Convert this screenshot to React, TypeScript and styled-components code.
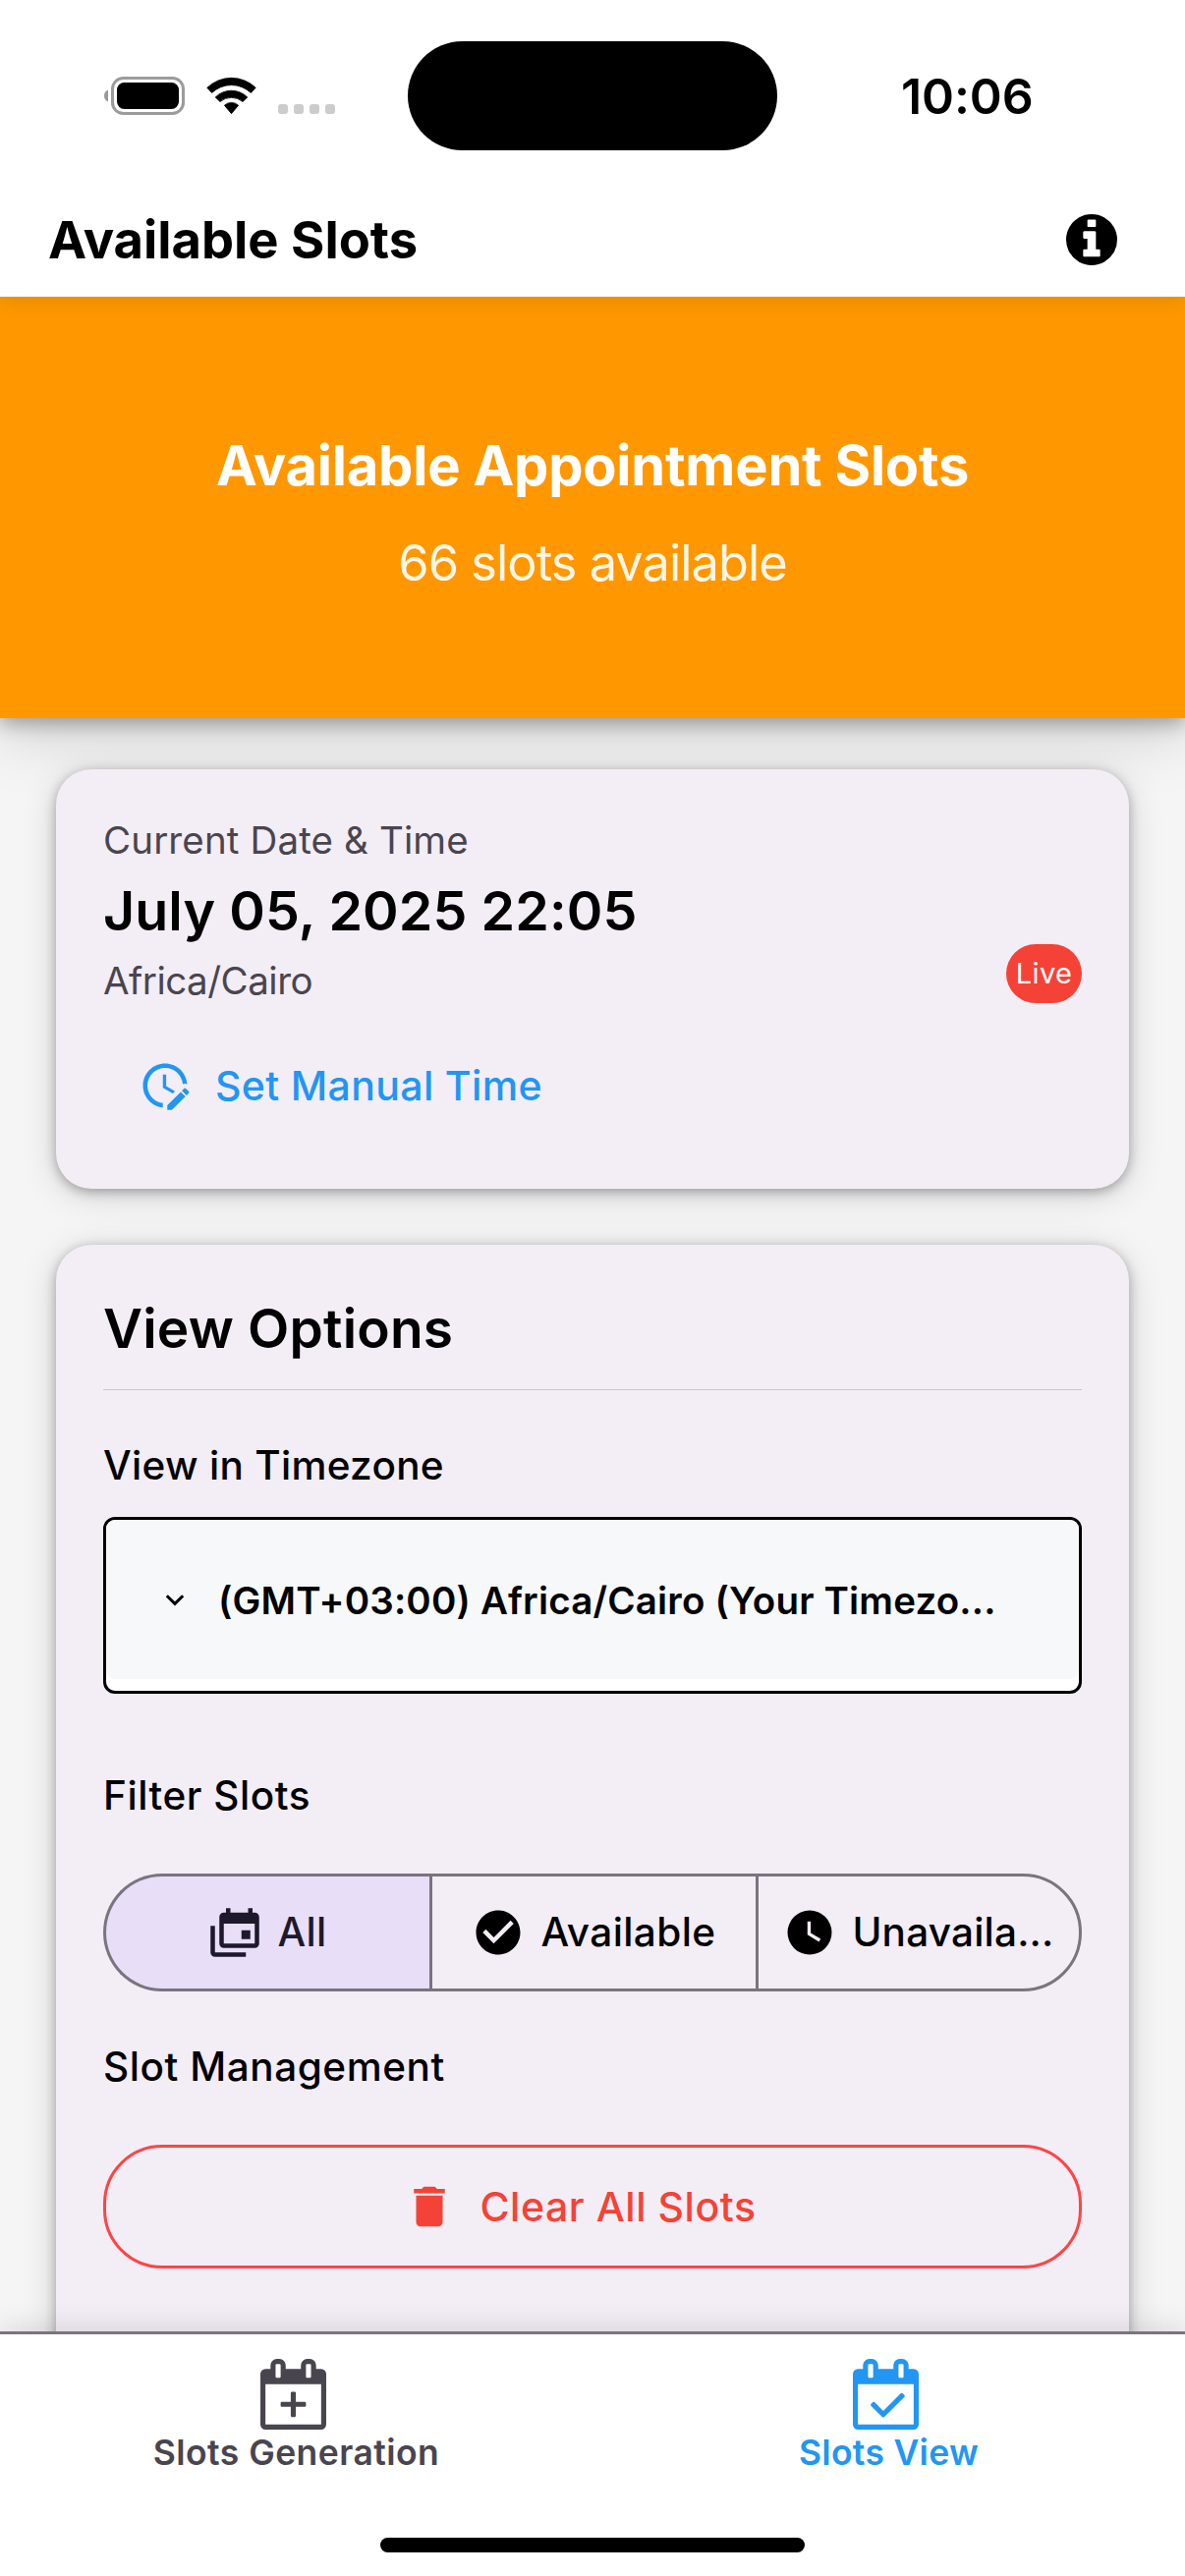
import React from "react";
import styled, { createGlobalStyle } from "styled-components";

const GlobalStyle = createGlobalStyle`
  *, *::before, *::after { box-sizing: border-box; }
  html, body { margin: 0; padding: 0; background: #ffffff; }
  h1, h2 { margin: 0; }
  button { font: inherit; margin: 0; padding: 0; border: 0; background: none; color: inherit; }
  svg { display: block; flex: none; }
`;

const Screen = styled.div`
  width: 1206px;
  height: 2622px;
  display: flex;
  flex-direction: column;
  overflow: hidden;
  background: #f5f5f5;
  color: #000000;
  font-family: Inter, "Liberation Sans", sans-serif;
`;

const Text = styled.span<{
  $size: number;
  $line: number;
  $weight?: number;
  $spacing?: number;
  $color?: string;
}>`
  display: block;
  font-size: ${(p) => p.$size}px;
  line-height: ${(p) => p.$line}px;
  font-weight: ${(p) => p.$weight ?? 400};
  letter-spacing: ${(p) => p.$spacing ?? 0}px;
  color: ${(p) => p.$color ?? "inherit"};
  white-space: nowrap;
`;

/* Top bars */

const TopArea = styled.header`
  position: relative;
  z-index: 2;
  flex: none;
  background: #ffffff;
  box-shadow: 0 3px 24px rgba(0, 0, 0, 0.11);
`;

const StatusBar = styled.div`
  height: 194px;
  display: grid;
  grid-template-columns: 415px 376px 1fr;
  align-items: center;
`;

const StatusIcons = styled.div`
  display: flex;
  align-items: center;
  padding: 1px 0 0 106px;
`;

const WifiSlot = styled.div`
  margin-left: 22px;
`;

const SignalDots = styled.div`
  display: flex;
  gap: 6px;
  margin: 27px 0 0 22px;
`;

const SignalDot = styled.i`
  width: 10px;
  height: 10px;
  border-radius: 3px;
  background: #cccccc;
`;

const Island = styled.div`
  height: 111px;
  border-radius: 56px;
  background: #000000;
`;

const Clock = styled.div`
  padding: 2px 0 0 126px;
`;

const TitleBar = styled.div`
  height: 108px;
  display: flex;
  align-items: center;
  justify-content: space-between;
  padding: 0 69px 8px 49px;
`;

const Hero = styled.section`
  flex: none;
  height: 429px;
  padding-top: 136px;
  display: flex;
  flex-direction: column;
  align-items: center;
  gap: 30px;
  background: #ff9800;
  color: #ffffff;
  box-shadow: 0 18px 60px rgba(0, 0, 0, 0.15), 0 6px 18px rgba(0, 0, 0, 0.3);
`;

/* Cards */

const Content = styled.main`
  flex: 1;
  min-height: 0;
  overflow: hidden;
  display: flex;
  flex-direction: column;
  gap: 57px;
  padding: 52px 57px 0;
`;

const Card = styled.section<{ $height: number }>`
  flex: none;
  height: ${(p) => p.$height}px;
  padding: 48px;
  border-radius: 36px;
  background: #f3edf6;
  box-shadow: 0 6px 36px rgba(0, 0, 0, 0.15), 0 3px 12px rgba(0, 0, 0, 0.3);
`;

const TimeRow = styled.div`
  display: flex;
  align-items: flex-end;
  justify-content: space-between;
`;

const LiveBadge = styled.div`
  width: 77px;
  height: 60px;
  display: flex;
  align-items: center;
  justify-content: center;
  border-radius: 30px;
  background: #f44336;
  color: #ffffff;
`;

const LinkButton = styled.button`
  height: 60px;
  margin-top: 54px;
  padding-left: 36px;
  display: flex;
  align-items: center;
  gap: 24px;
  color: #2196f3;
`;

const Divider = styled.hr`
  height: 1px;
  margin: 25px 0 0;
  border: 0;
  background: #cac4d0;
`;

const FieldLabel = styled.div<{ $top: number }>`
  margin-top: ${(p) => p.$top}px;
`;

const Select = styled.div`
  height: 180px;
  margin-top: 22px;
  border: 3px solid #000000;
  border-radius: 12px;
  background: #ffffff;
`;

const SelectFill = styled.div`
  height: 162px;
  display: flex;
  align-items: center;
  gap: 34px;
  padding: 2px 0 0 60px;
  border-radius: 9px;
  background: #f7f8fa;
`;

const Segments = styled.div`
  height: 120px;
  margin-top: 49px;
  display: grid;
  grid-template-columns: repeat(3, 1fr);
`;

const Segment = styled.button<{ $active?: boolean }>`
  display: flex;
  align-items: center;
  justify-content: center;
  gap: 16px;
  border: 3px solid #79747e;
  border-right-width: 0;
  background: ${(p) => (p.$active ? "#e8def8" : "transparent")};
  color: ${(p) => (p.$active ? "#1d192b" : "#000000")};

  &:first-child {
    border-radius: 60px 0 0 60px;
  }

  &:last-child {
    border-right-width: 3px;
    border-radius: 0 60px 60px 0;
  }
`;

const ClearButton = styled.button`
  width: 100%;
  height: 126px;
  margin-top: 49px;
  padding-right: 26px;
  display: flex;
  align-items: center;
  justify-content: center;
  gap: 24px;
  border: 3px solid #ff4444;
  border-radius: 60px;
  color: #f44336;
`;

/* Bottom navigation */

const BottomNav = styled.nav`
  position: relative;
  z-index: 2;
  flex: none;
  height: 249px;
  display: flex;
  flex-direction: column;
  align-items: center;
  border-top: 3px solid #79747e;
  background: #ffffff;
  box-shadow: 0 -6px 24px rgba(0, 0, 0, 0.1);
`;

const NavItems = styled.div`
  width: 100%;
  height: 207px;
  display: grid;
  grid-template-columns: 1fr 1fr;
`;

const NavItem = styled.button<{ $active?: boolean }>`
  display: flex;
  flex-direction: column;
  align-items: center;
  justify-content: flex-start;
  padding-top: 25px;
  color: ${(p) => (p.$active ? "#2196f3" : "#49454f")};
`;

const NavIcon = styled.div`
  width: 73px;
  height: 72px;
`;

const HomeIndicator = styled.div`
  width: 432px;
  height: 15px;
  border-radius: 8px;
  background: #000000;
`;

/* Icons */

const Battery = () => (
  <svg width="82" height="39" viewBox="0 0 82 39">
    <path d="M4 13.5v12C1.5 24.6 0 22.3 0 19.5s1.500-5.100 4-6z" fill="#999999" />
    <rect x="8.500" y="1.500" width="72" height="36" rx="11" fill="none" stroke="#9b9b9b" strokeWidth="3" />
    <rect x="13" y="6" width="63" height="27" rx="7.500" />
  </svg>
);

const Wifi = () => (
  <svg width="51" height="39" viewBox="0 0 51 39" stroke="#000" strokeWidth="0.8" strokeLinejoin="round">
    <path d="M.8 11.300A35.500 35.500 0 0 1 50.200 11.300L45.400 16.500A29 29 0 0 0 5.600 16.500Z" />
    <path d="M9.200 21A23 23 0 0 1 41.800 21L37 25.500A18 18 0 0 0 14 25.500Z" />
    <path d="M18.400 29.200A10.400 10.400 0 0 1 32.600 29.200L25.500 37.700Z" />
  </svg>
);

const InfoCircle = () => (
  <svg width="52" height="52" viewBox="128 128 1536 1536">
    <path d="M1152 1376v-160q0-14-9-23t-23-9h-96v-512q0-14-9-23t-23-9h-320q-14 0-23 9t-9 23v160q0 14 9 23t23 9h96v320h-96q-14 0-23 9t-9 23v160q0 14 9 23t23 9h448q14 0 23-9t9-23zm-128-896v-160q0-14-9-23t-23-9h-192q-14 0-23 9t-9 23v160q0 14 9 23t23 9h192q14 0 23-9t9-23zm640 416q0 209-103 385.5t-279.5 279.5-385.5 103-385.5-103-279.5-279.5-103-385.5 103-385.5 279.5-279.5 385.5-103 385.5 103 279.5 279.5 103 385.5z" />
  </svg>
);

const Glyph = ({ d }: { d: string }) => (
  <svg width="54" height="54" viewBox="0 0 24 24" fill="currentColor">
    <path d={d} />
  </svg>
);

const CLOCK_EDIT =
  "M21 13.1c-.1 0-.3.1-.4.2l-1 1l2.1 2.1l1-1c.2-.2.2-.6 0-.8l-1.3-1.3c-.1-.1-.2-.2-.4-.2m-1.900 1.800l-6.100 6V23h2.100l6.100-6.100zM12.500 7v5.200l4 2.400l-1 1L11 13V7zM11 21.900c-5.100-.5-9-4.800-9-9.900C2 6.500 6.500 2 12 2c5.300 0 9.600 4.100 10 9.300c-.3-.1-.6-.2-1-.2s-.7.1-1 .2C19.600 7.200 16.200 4 12 4c-4.400 0-8 3.600-8 8c0 4.100 3.100 7.500 7.100 7.900l-.1.2z";
const CALENDAR_MULTIPLE =
  "M21 17V8H7v9zm0-14a2 2 0 0 1 2 2v12a2 2 0 0 1-2 2H7a2 2 0 0 1-2-2V5a2 2 0 0 1 2-2h1V1h2v2h8V1h2v2zM3 21h14v2H3a2 2 0 0 1-2-2V9h2zm16-6h-4v-4h4z";
const CHECK_CIRCLE =
  "M12 2C6.500 2 2 6.500 2 12s4.500 10 10 10s10-4.500 10-10S17.500 2 12 2m-2 15l-5-5l1.410-1.410L10 14.170l7.590-7.590L19 8z";
const CLOCK =
  "M12 2A10 10 0 0 0 2 12a10 10 0 0 0 10 10a10 10 0 0 0 10-10A10 10 0 0 0 12 2m4.200 14.200L11 13V7h1.500v5.200l4.500 2.700z";
const DELETE = "M19 4h-3.500l-1-1h-5l-1 1H5v2h14M6 19a2 2 0 0 0 2 2h8a2 2 0 0 0 2-2V7H6z";

const CALENDAR_FRAME =
  "M128 1664h1408v-1024h-1408v1024zm384-1216v-288q0-14-9-23t-23-9h-64q-14 0-23 9t-9 23v288q0 14 9 23t23 9h64q14 0 23-9t9-23zm768 0v-288q0-14-9-23t-23-9h-64q-14 0-23 9t-9 23v288q0 14 9 23t23 9h64q14 0 23-9t9-23zm384-64v1280q0 52-38 90t-90 38h-1408q-52 0-90-38t-38-90v-1280q0-52 38-90t90-38h128v-96q0-66 47-113t113-47h64q66 0 113 47t47 113v96h384v-96q0-66 47-113t113-47h64q66 0 113 47t47 113v96h128q52 0 90 38t38 90z";
const PLUS_MARK =
  "M1152 1120v64q0 14-9 23t-23 9h-224v224q0 14-9 23t-23 9h-64q-14 0-23-9t-9-23v-224h-224q-14 0-23-9t-9-23v-64q0-14 9-23t23-9h224v-224q0-14 9-23t23-9h64q14 0 23 9t9 23v224h224q14 0 23 9t9 23z";
const CHECK_MARK =
  "M1303 964l-512 512q-10 9-23 9t-23-9l-288-288q-9-10-9-23t9-22l46-46q9-9 22-9t23 9l220 220 444-444q10-9 23-9t22 9l46 46q9 9 9 22t-9 23z";

const CalendarGlyph = ({ mark }: { mark: string }) => (
  <svg width="67" height="72" viewBox="0 0 1664 1792" preserveAspectRatio="none" fill="currentColor">
    <path d={CALENDAR_FRAME} />
    <path d={mark} />
  </svg>
);

const ChevronDown = () => (
  <svg width="20" height="14" viewBox="0 0 20 14" fill="none" stroke="#000" strokeWidth="3">
    <path d="M1.800 2.200L10 10.400L18.200 2.200" />
  </svg>
);

export default function App() {
  return (
    <Screen>
      <GlobalStyle />
      <TopArea>
        <StatusBar>
          <StatusIcons>
            <Battery />
            <WifiSlot>
              <Wifi />
            </WifiSlot>
            <SignalDots>
              <SignalDot />
              <SignalDot />
              <SignalDot />
              <SignalDot />
            </SignalDots>
          </StatusIcons>
          <Island />
          <Clock>
            <Text $size={50} $line={60} $weight={600} $spacing={-0.1}>10:06</Text>
          </Clock>
        </StatusBar>
        <TitleBar>
          <Text as="h1" $size={52.5} $line={64} $weight={700}>Available Slots</Text>
          <InfoCircle />
        </TitleBar>
      </TopArea>

      <Hero>
        <Text as="h2" $size={56} $line={72} $weight={700} $spacing={-0.2}>Available Appointment Slots</Text>
        <Text $size={50.5} $line={66} $spacing={-0.95} $color="rgba(255,255,255,0.9)">66 slots available</Text>
      </Hero>

      <Content>
        <Card $height={427}>
          <TimeRow>
            <div>
              <Text $size={38.5} $line={48} $spacing={0.13} $color="#49454f">Current Date &amp; Time</Text>
              <Text $size={55.5} $line={96} $weight={600} $spacing={0.1}>July 05, 2025 22:05</Text>
              <Text $size={38.5} $line={46} $spacing={-0.5} $color="#49454f">Africa/Cairo</Text>
            </div>
            <LiveBadge>
              <Text $size={29} $line={40} $spacing={0.3}>Live</Text>
            </LiveBadge>
          </TimeRow>
          <LinkButton>
            <Glyph d={CLOCK_EDIT} />
            <Text $size={41} $line={60} $weight={500} $spacing={0.35}>Set Manual Time</Text>
          </LinkButton>
        </Card>

        <Card $height={1200}>
          <Text as="h2" $size={55} $line={74} $weight={600} $spacing={0.2}>View Options</Text>
          <Divider />
          <FieldLabel $top={47}>
            <Text $size={40.5} $line={60} $weight={500} $spacing={0.3}>View in Timezone</Text>
          </FieldLabel>
          <Select>
            <SelectFill>
              <ChevronDown />
              <Text $size={38.5} $line={56} $weight={600} $spacing={0.18}>(GMT+03:00) Africa/Cairo (Your Timezo...</Text>
            </SelectFill>
          </Select>
          <FieldLabel $top={74}>
            <Text $size={40.5} $line={60} $weight={500} $spacing={0.55}>Filter Slots</Text>
          </FieldLabel>
          <Segments>
            <Segment $active>
              <Glyph d={CALENDAR_MULTIPLE} />
              <Text $size={40.5} $line={60} $weight={500} $spacing={0.3}>All</Text>
            </Segment>
            <Segment>
              <Glyph d={CHECK_CIRCLE} />
              <Text $size={40.5} $line={60} $weight={500} $spacing={0.4}>Available</Text>
            </Segment>
            <Segment>
              <Glyph d={CLOCK} />
              <Text $size={40.5} $line={60} $weight={500} $spacing={0.2}>Unavaila...</Text>
            </Segment>
          </Segments>
          <FieldLabel $top={47}>
            <Text $size={40.5} $line={60} $weight={500} $spacing={0.55}>Slot Management</Text>
          </FieldLabel>
          <ClearButton>
            <Glyph d={DELETE} />
            <Text $size={41} $line={60} $weight={500} $spacing={0.55}>Clear All Slots</Text>
          </ClearButton>
        </Card>
      </Content>

      <BottomNav>
        <NavItems>
          <NavItem>
            <NavIcon>
              <CalendarGlyph mark={PLUS_MARK} />
            </NavIcon>
            <Text $size={35.5} $line={48} $weight={600} $spacing={0.45}>Slots Generation</Text>
          </NavItem>
          <NavItem $active>
            <NavIcon>
              <CalendarGlyph mark={CHECK_MARK} />
            </NavIcon>
            <Text $size={35.5} $line={48} $weight={600} $spacing={0.3}>Slots View</Text>
          </NavItem>
        </NavItems>
        <HomeIndicator />
      </BottomNav>
    </Screen>
  );
}
